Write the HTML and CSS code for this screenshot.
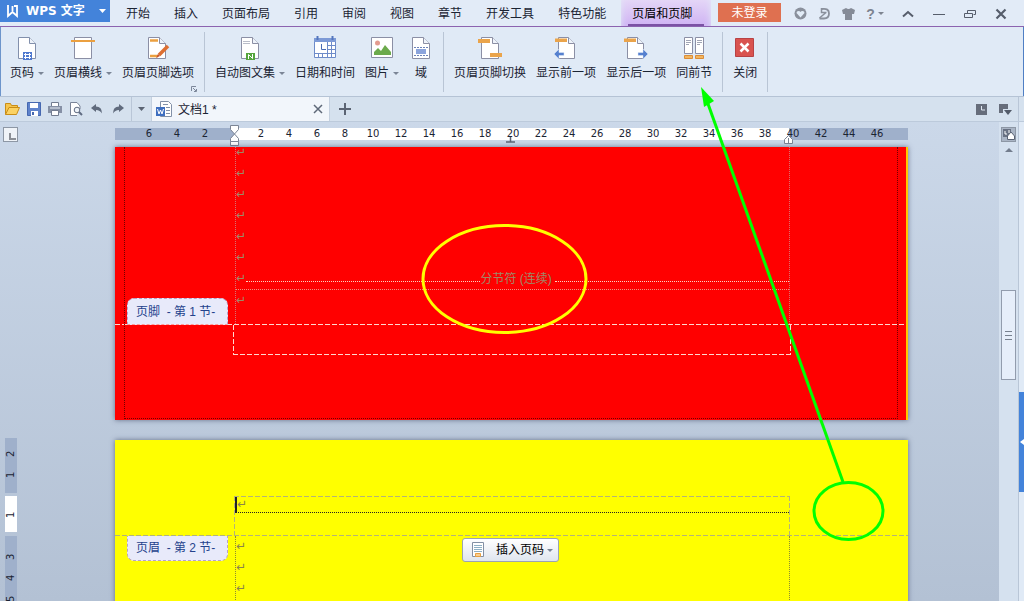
FILE: index.html
```html
<!DOCTYPE html>
<html lang="zh-CN">
<head>
<meta charset="utf-8">
<title>WPS 文字 - 文档1</title>
<link rel="stylesheet" href="styles.css">
</head>
<body>
<div class="app">
  <header class="titlebar">
    <button class="brand">
      <svg width="13" height="13" viewBox="0 0 13 13"><path d="M2 0v11l4.500-4 4.500 4V1H8M6.500 1v5" fill="none" stroke="#fff" stroke-width="1.800"/></svg>
      <span>WPS 文字</span>
      <svg class="brand-caret" width="7" height="4" viewBox="0 0 7 4"><path d="M0 0h7L3.500 4z" fill="#fff"/></svg>
    </button>
    <nav class="menu">
      <button>开始</button><button>插入</button><button>页面布局</button><button>引用</button><button>审阅</button><button>视图</button><button>章节</button><button>开发工具</button><button>特色功能</button><button class="active">页眉和页脚</button>
    </nav>
    <button class="login">未登录</button>
    <div class="tools">
      <button aria-label="云服务"><svg width="13" height="13" viewBox="0 0 13 13"><circle cx="6.500" cy="6.500" r="6" fill="#8a909c"/><path d="M6.500 10.500L2.500 6q0-2 2-2 1.500 0 2 1 .5-1 2-1 2 0 2 2z" fill="#e2ecf7"/></svg></button>
      <button aria-label="反馈"><svg width="13" height="13" viewBox="0 0 13 13"><path d="M4 2Q11 1 11 6.500 11 11.500 6 11.500H1.500" fill="none" stroke="#8a909c" stroke-width="1.800"/><path d="M3.500 1v4.500h5M8 5.500L1.500 11" fill="none" stroke="#8a909c" stroke-width="1.500"/></svg></button>
      <button aria-label="皮肤"><svg width="13" height="13" viewBox="0 0 13 13"><path d="M4 1q2.500 2 5 0l4 2-1 4h-2v6H3V7H1L0 3z" fill="#858b97"/></svg></button>
      <button class="help" aria-label="帮助"><b>?</b><svg width="6" height="3" viewBox="0 0 6 3"><path d="M0 0h6L3 3z" fill="#7d8490"/></svg></button>
    </div>
    <div class="window-buttons">
      <button aria-label="折叠功能区"><svg width="12" height="12" viewBox="0 0 12 12"><path d="M1 8.500L6 4l5 4.500" fill="none" stroke="#565d6b" stroke-width="2"/></svg></button>
      <button aria-label="最小化"><svg width="12" height="12" viewBox="0 0 12 12"><path d="M0 6.500h12" stroke="#565d6b"/></svg></button>
      <button aria-label="还原"><svg width="12" height="12" viewBox="0 0 12 12"><path d="M3.500 5V2.500h8v4h-2" fill="none" stroke="#565d6b"/><path d="M.5 5.500h8v4h-8z" fill="none" stroke="#565d6b"/></svg></button>
      <button aria-label="关闭窗口"><svg width="12" height="12" viewBox="0 0 12 12"><path d="M1.500 1.500l9 9M10.500 1.500l-9 9" stroke="#565d6b" stroke-width="2.200"/></svg></button>
    </div>
  </header>

  <section class="ribbon">
    <button class="cmd"><svg width="24" height="24" viewBox="0 0 24 24"><path d="M3.500 1.500h11l6 6v15h-17z" fill="#fff" stroke="#8290ac"/><path d="M14.500 1.500v6h6" fill="#eef3fa" stroke="#8290ac"/><path d="M8 16h9v8H8z" fill="#4f79cf"/><path d="M10.500 17v6M14.500 17v6M9 18.500h7M9 21.500h7" stroke="#fff"/></svg><span>页码<i class="caret"></i></span></button>
    <button class="cmd"><svg width="24" height="24" viewBox="0 0 24 24"><path d="M3.500 1.500h17v21h-17z" fill="#fff" stroke="#8b8fa5"/><path d="M0 5h24" stroke="#eba040" stroke-width="2"/></svg><span>页眉横线<i class="caret"></i></span></button>
    <button class="cmd"><svg width="24" height="24" viewBox="0 0 24 24"><path d="M2.500 1.500h11l6 6v15h-17z" fill="#fff" stroke="#8b8fa5"/><path d="M13.500 1.500v6h6" fill="#eef3fa" stroke="#8b8fa5"/><path d="M4 4.500h8M4 20h8" stroke="#eba040" stroke-width="2.500"/><path d="M13 19l9-9" stroke="#dd6f32" stroke-width="3.500"/><path d="M10 22l2-4 2 2z" fill="#c65329"/></svg><span>页眉页脚选项</span></button>
    <svg class="launcher" width="6" height="6" viewBox="0 0 6 6"><path d="M.5 5V.5H5M3 5.500h2.500V3M2 2l3 3" fill="none" stroke="#7c879a"/></svg>
    <i class="divider"></i>
    <button class="cmd"><svg width="24" height="24" viewBox="0 0 24 24"><path d="M3.500 1.500h11l6 6v15h-17z" fill="#fff" stroke="#8b8fa5"/><path d="M14.500 1.500v6h6" fill="#eef3fa" stroke="#8b8fa5"/><path d="M5 5.500h7M5 7.500h7" stroke="#b9bdc9"/><path d="M8 17h9v7H8z" fill="#55a53c"/><path d="M10.500 23v-4.500l4 4V18" fill="none" stroke="#fff"/></svg><span>自动图文集<i class="caret"></i></span></button>
    <button class="cmd"><svg width="24" height="24" viewBox="0 0 24 24"><path d="M1.500 2.500h21v19h-21z" fill="#fff" stroke="#6d8bc9"/><path d="M1 2h22v4H1z" fill="#7d9ad6"/><path d="M4.500 0v4M19.500 0v4" stroke="#5476bd" stroke-width="2"/><path d="M1.500 17.500h21M15 9.500h7M15 13.500h7M5.500 17v4M9.500 17v4M14.500 6v15M18.500 6v15" stroke="#6d8bc9"/><path d="M8.500 8v5.500H13" fill="none" stroke="#4a6db5"/></svg><span>日期和时间</span></button>
    <button class="cmd"><svg width="24" height="24" viewBox="0 0 24 24"><path d="M1.500 1.500h21v20h-21z" fill="#fff" stroke="#8b8fa5"/><circle cx="7.500" cy="7" r="2.500" fill="#e39b90"/><path d="M4 19v-3l4-4 3 3 4-6 6 7v3z" fill="#6caa4c"/></svg><span>图片<i class="caret"></i></span></button>
    <button class="cmd"><svg width="24" height="24" viewBox="0 0 24 24"><path d="M3.500 1.500h11l6 6v15h-17z" fill="#fff" stroke="#8b8fa5"/><path d="M14.500 1.500v6h6" fill="#eef3fa" stroke="#8b8fa5"/><path d="M7 13h10v5H7z" fill="#8ba4dc"/><path d="M5 11.500h14M5 19.500h14" stroke="#6d83b8" stroke-dasharray="2 1"/></svg><span>域</span></button>
    <i class="divider"></i>
    <button class="cmd"><svg width="24" height="24" viewBox="0 0 24 24"><path d="M3.500 1.500h11l6 6v15h-17z" fill="#fff" stroke="#8b8fa5"/><path d="M14.500 1.500v6h6" fill="#eef3fa" stroke="#8b8fa5"/><path d="M0 3h12v4H0zM12 17h12v4H12z" fill="#eaa44b"/></svg><span>页眉页脚切换</span></button>
    <button class="cmd"><svg width="24" height="24" viewBox="0 0 24 24"><path d="M4.500 1.500h10l6 6v15h-16z" fill="#fff" stroke="#8b8fa5"/><path d="M14.500 1.500v6h6" fill="#eef3fa" stroke="#8b8fa5"/><path d="M1 2.500h12v3.500H1z" fill="#eaa44b"/><path d="M0 18l5-5v3.500h5v3H5V23z" fill="#5580cf" stroke="#e0eaf6" stroke-width=".5"/></svg><span>显示前一项</span></button>
    <button class="cmd"><svg width="24" height="24" viewBox="0 0 24 24"><path d="M3.500 1.500h10l6 6v15h-16z" fill="#fff" stroke="#8b8fa5"/><path d="M13.500 1.500v6h6" fill="#eef3fa" stroke="#8b8fa5"/><path d="M0 2.500h12v3.500H0z" fill="#eaa44b"/><path d="M24 18l-5-5v3.500h-5v3h5V23z" fill="#5580cf" stroke="#e0eaf6" stroke-width=".5"/></svg><span>显示后一项</span></button>
    <button class="cmd"><svg width="24" height="24" viewBox="0 0 24 24"><path d="M2.500 1.500h8v16h-8zM13.500 1.500h8v16h-8z" fill="#fff" stroke="#8b8fa5"/><path d="M4 4.500h5M4 6.500h5M4 8.500h3M15 4.500h5M15 6.500h5M15 8.500h3" stroke="#a0a5b5"/><path d="M2.500 19.500h8v3h-8zM13.500 19.500h8v3h-8z" fill="#f2b660" stroke="#dc8c35"/></svg><span>同前节</span></button>
    <i class="divider"></i>
    <button class="cmd"><svg width="24" height="24" viewBox="0 0 24 24"><path d="M2.500 2.500h18v18h-18z" fill="#d9534f" stroke="#b84245"/><path d="M7.500 7.500l8 8M15.500 7.500l-8 8" stroke="#fff" stroke-width="2.500"/></svg><span>关闭</span></button>
    <i class="divider"></i>
  </section>

  <section class="filebar">
    <div class="quick">
      <button aria-label="打开"><svg width="15" height="14" viewBox="0 0 15 14"><path d="M.5 12.500v-11h5l1 2h6V6" fill="#f6c54c" stroke="#c98d16"/><path d="M.5 12.500L4 5.500h10.500l-3 7z" fill="#fbd263" stroke="#c98d16"/></svg></button>
      <button aria-label="保存"><svg width="14" height="14" viewBox="0 0 14 14"><path d="M.5 .5h13v13H.5z" fill="#5f83cb" stroke="#4668b0"/><path d="M3 1h8v5H3zM4 9h7v5H4z" fill="#fff"/><path d="M5 10h2v3H5z" fill="#4668b0"/></svg></button>
      <button aria-label="打印"><svg width="14" height="14" viewBox="0 0 14 14"><path d="M3.500 4V.5h7V4" fill="#fff" stroke="#737d90"/><path d="M0 4h14v7H0z" fill="#8590a5"/><path d="M3.500 8.500h7v5h-7z" fill="#fff" stroke="#737d90"/><path d="M2 6h10" stroke="#e7edf5"/></svg></button>
      <button aria-label="打印预览"><svg width="14" height="14" viewBox="0 0 14 14"><path d="M11 7V4L8 .5H1.500v13H8" fill="#fff" stroke="#7a8498"/><circle cx="8" cy="8" r="2.800" fill="#eef3f9" stroke="#606c82"/><path d="M10 10l3 3" stroke="#606c82" stroke-width="2"/></svg></button>
      <button aria-label="撤销"><svg width="12" height="10" viewBox="0 0 12 10"><path d="M0 4l5-4v2.500q6 0 6 7Q9 6 5 6v2z" fill="#606b7d"/></svg></button>
      <button aria-label="恢复"><svg width="12" height="10" viewBox="0 0 12 10"><path d="M12 4L7 0v2.500q-6 0-6 7Q3 6 7 6v2z" fill="#606b7d"/></svg></button>
    </div>
    <button class="more" aria-label="自定义快速访问"><svg width="7" height="4" viewBox="0 0 7 4"><path d="M0 0h7L3.500 4z" fill="#5b6473"/></svg></button>
    <div class="filetab">
      <svg width="16" height="16" viewBox="0 0 16 16"><path d="M4.500 .5h8l3 3v12h-11z" fill="#fff" stroke="#8291a8"/><path d="M7 3.500h5M10 6.500h4M10 9.500h4M10 12.500h4" stroke="#8291a8"/><path d="M0 6h9v9H0z" fill="#3f6fc0"/><path d="M1.500 8l1.500 5 1.500-4L6 13l1.500-5" fill="none" stroke="#fff"/></svg>
      <span>文档1 *</span>
      <button aria-label="关闭文档"><svg width="10" height="10" viewBox="0 0 10 10"><path d="M1 1l8 8M9 1L1 9" stroke="#5e6878" stroke-width="1.500"/></svg></button>
    </div>
    <button class="new" aria-label="新建"><svg width="12" height="12" viewBox="0 0 12 12"><path d="M6 0v12M0 6h12" stroke="#5b6473" stroke-width="2"/></svg></button>
    <div class="filebar-end">
      <button aria-label="历史"><svg width="11" height="11" viewBox="0 0 11 11"><path d="M0 0h11v11H0z" fill="#666d7b"/><path d="M5.500 2v4H9" fill="none" stroke="#e0e8f2"/></svg></button>
      <button aria-label="窗口列表"><svg width="13" height="11" viewBox="0 0 13 11"><path d="M0 0h9v5H4v4H0z" fill="#666d7b"/><path d="M5 6h8l-4 5z" fill="#525a69"/></svg></button>
    </div>
  </section>

  <main class="work">
    <aside class="side">
      <button class="tabstop" aria-label="制表位"><svg width="7" height="7" viewBox="0 0 7 7"><path d="M1 0v6h6" fill="none" stroke="#8b8f96" stroke-width="2"/></svg></button>
      <div class="vruler"><div class="v-top"><span>2</span><span>1</span></div><div class="v-mid"><span>1</span></div><div class="v-low"><span>3</span><span>4</span><span>5</span></div></div>
    </aside>

    <div class="canvas">
      <div class="hruler">
        <span>6</span><span>4</span><span>2</span><span></span><span>2</span><span>4</span><span>6</span><span>8</span><span>10</span><span>12</span><span>14</span><span>16</span><span>18</span><span>20</span><span>22</span><span>24</span><span>26</span><span>28</span><span>30</span><span>32</span><span>34</span><span>36</span><span>38</span><span>40</span><span>42</span><span>44</span><span>46</span>
        <svg class="indent-left" width="9" height="21" viewBox="0 0 9 21"><path d="M.5 .5h8v4l-4 4.500 4 4.500v3h-8v-3L4.500 9 .5 4.500zM.5 16.500h8v4h-8z" fill="#fff" stroke="#7c8595"/></svg>
        <svg class="indent-mid" width="9" height="6" viewBox="0 0 9 6"><path d="M0 5h9M4.500 0v5" stroke="#5c6575" stroke-width="1.500"/></svg>
        <svg class="indent-right" width="9" height="9" viewBox="0 0 9 9"><path d="M.5 8.500v-4l4-4 4 4v4zM4.500 3v5" fill="#fff" stroke="#7c8595"/></svg>
      </div>

      <article class="page red">
        <div class="text-body">
          <p class="mark">↵</p><p class="mark">↵</p><p class="mark">↵</p><p class="mark">↵</p><p class="mark">↵</p><p class="mark">↵</p>
          <p class="mark section-break">↵<i></i><span>分节符 (连续)</span><i></i></p>
          <p class="mark last">↵</p>
        </div>
        <div class="footer-zone"><div class="footer-box"></div></div>
        <span class="tag tag-footer">页脚&nbsp; - 第 1 节-</span>
      </article>

      <article class="page yellow">
        <div class="header-zone"><div class="header-box"><p class="mark">↵</p></div></div>
        <div class="text-body"><p class="mark">↵</p><p class="mark">↵</p><p class="mark">↵</p></div>
        <span class="tag tag-header">页眉&nbsp; - 第 2 节-</span>
        <button class="insert-number"><svg width="14" height="16" viewBox="0 0 14 16"><path d="M1.500 .5h11v14h-11z" fill="#fff" stroke="#8390a4"/><path d="M3 3.500h8M3 5.500h8M3 7.500h8M3 9.500h8" stroke="#8fb0c4"/><path d="M4.500 11.500h5v3h-5z" fill="#f9cd8e" stroke="#e8a042"/></svg><span>插入页码</span><i class="caret"></i></button>
      </article>
    </div>

    <div class="scroll">
      <button class="browse" aria-label="选择浏览对象"><svg width="12" height="11" viewBox="0 0 12 11"><path d="M0 0h8v8H0z" fill="#697283"/><path d="M2 2v3h2M6 1v3" fill="none" stroke="#fff"/><path d="M4.500 10.500V7l3.500-4 3.500 4v3.500z" fill="#fff" stroke="#596273"/></svg></button>
      <button class="up" aria-label="向上滚动"><svg width="8" height="4" viewBox="0 0 8 4"><path d="M0 4h8L4 0z" fill="#737d8d"/></svg></button>
      <div class="thumb"><i></i><i></i><i></i></div>
    </div>
    <div class="dock"><button aria-label="展开任务窗格"><svg width="4" height="6" viewBox="0 0 4 6"><path d="M4 0v6L0 3z" fill="#fff"/></svg></button></div>
  </main>

  <svg class="notes" width="1024" height="601" viewBox="0 0 1024 601">
    <ellipse cx="504.500" cy="279" rx="81.500" ry="53.500" fill="none" stroke="#ffff00" stroke-width="3"/>
    <g stroke="#00ff00" stroke-width="3" fill="none"><ellipse cx="848.500" cy="511" rx="34.500" ry="28.500"/><path d="M843 482L707 101"/></g>
    <path d="M701 87l13 14-10 6z" fill="#00ff00"/>
  </svg>
</div>
</body>
</html>
```
FILE: styles.css
```css
* { box-sizing: border-box; }
body {
  margin: 0;
  font: 12px/16px "Liberation Sans", "Noto Sans CJK SC", sans-serif;
  color: #1b2433;
}
button {
  display: flex;
  align-items: center;
  justify-content: center;
  margin: 0;
  padding: 0;
  border: 0;
  background: none;
  color: inherit;
  font: inherit;
  white-space: nowrap;
}
p { margin: 0; }
svg { flex: none; display: block; }

.app {
  position: relative;
  display: flex;
  flex-direction: column;
  height: 100vh;
  overflow: hidden;
}

/* Title bar */
.titlebar {
  display: flex;
  height: 27px;
  flex: none;
  padding-right: 8px;
  background: #e2ebf7;
  border-bottom: 1px solid #8c63b0;
}
.brand {
  width: 110px;
  height: 22px;
  padding: 0 4px 0 6px;
  gap: 7px;
  justify-content: flex-start;
  background: #4383da;
  color: #fff;
  font-family: "DejaVu Sans", "Noto Sans CJK SC", sans-serif;
  font-weight: bold;
}
.brand-caret { margin-left: auto; }
.menu { display: flex; margin-left: 4px; }
.menu button { padding: 2px 12px 0; }
.menu .active {
  width: 90px;
  margin-left: 3px;
  padding-left: 11px;
  justify-content: flex-start;
  background: linear-gradient(#e4d6f7, #cfb3f3);
  box-shadow: inset 7px 0 7px -7px #e2ebf7, inset -7px 0 7px -7px #e2ebf7;
  color: #000;
  position: relative;
}
.menu .active::after {
  content: "";
  position: absolute;
  inset: auto 7px 0 7px;
  height: 2px;
  background: #7b52a4;
}
.login {
  width: 63px;
  height: 19px;
  margin: 3px 7px 0 auto;
  background: #df7050;
  color: #fff;
}
.tools, .window-buttons { display: flex; padding-top: 1px; }
.tools button { width: 24px; }
.tools .help {
  width: 30px;
  margin-right: 2px;
  gap: 3px;
  font: bold 14px/16px "Liberation Sans", sans-serif;
  color: #7d8490;
}
.window-buttons button { width: 31px; }

/* Ribbon */
.ribbon {
  position: relative;
  display: flex;
  flex: none;
  gap: 10px;
  height: 70px;
  padding: 5px 10px;
  background: #e0eaf6;
  border: solid #b5c3d5;
  border-width: 0 0 1px;
  box-shadow: inset 1px 0 #6d95cb, inset -1px 0 #4f7fc4;
}
.cmd {
  flex-direction: column;
  justify-content: flex-start;
  gap: 5px;
  padding-top: 4px;
}
.cmd span { display: flex; align-items: center; }
.caret {
  margin-left: 4px;
  border: 3px solid transparent;
  border-top-color: #7b8596;
  border-bottom: 0;
}
.divider { width: 1px; height: 60px; background: #b9c5d5; }
.launcher { position: absolute; left: 191px; bottom: 4px; }

/* Quick access and file tabs */
.filebar {
  display: flex;
  align-items: center;
  flex: none;
  height: 25px;
  background: #d5e1ee;
  border-bottom: 1px solid #bccadb;
}
.quick { display: flex; padding: 0 3px 0 2px; }
.quick button { width: 21px; height: 24px; }
.more {
  width: 20px;
  height: 24px;
  border-left: 1px solid #b9c6d7;
}
.filetab {
  display: flex;
  align-items: center;
  align-self: stretch;
  width: 179px;
  padding: 0 6px 0 4px;
  gap: 6px;
  background: #f2f6fb;
  border: solid #c4d0df;
  border-width: 0 1px;
}
.filetab span { flex: 1; padding-top: 2px; }
.new { width: 30px; height: 24px; }
.filebar-end {
  display: flex;
  align-self: stretch;
  gap: 12px;
  margin-left: auto;
  margin-right: 5px;
  padding-right: 6px;
  border-right: 1px solid #b9c6d7;
}

/* Work area */
.work {
  display: flex;
  flex: 1;
  min-height: 0;
  background: linear-gradient(#cbd8e9, #b3c1d4);
}
.side { width: 24px; padding: 5px 0 0 3px; }
.tabstop {
  width: 15px;
  height: 15px;
  padding: 3px 0 0 3px;
  background: #eff3f8;
  border: 1px solid #8d97a5;
}
.vruler {
  width: 12px;
  margin: 296px 0 0 2px;
  font: 10px/12px "DejaVu Sans", sans-serif;
}
.vruler div { display: flex; flex-direction: column; background: #9fb0cb; }
.vruler span {
  height: 21px;
  writing-mode: vertical-rl;
  transform: rotate(180deg);
  text-align: center;
}
.vruler .v-top { height: 55px; padding-top: 5px; }
.vruler .v-mid { height: 36px; margin: 3px 0 4px; padding-top: 8px; background: #fff; }
.vruler .v-low { height: 80px; padding-top: 10px; }

.canvas {
  flex: 1;
  display: flex;
  flex-direction: column;
  align-items: center;
  min-width: 0;
  overflow: hidden;
}
.hruler {
  position: relative;
  display: flex;
  flex: none;
  width: 793px;
  height: 12px;
  margin: 6px 0 7px;
  padding-left: 20px;
  background: linear-gradient(90deg, #9fb0cb 120px, #fff 120px 674px, #9fb0cb 674px);
  font: 10px/12px "DejaVu Sans", sans-serif;
}
.hruler span { width: 28px; text-align: center; }
.hruler svg { position: absolute; }
.indent-left { left: 115px; top: -3px; }
.indent-mid { left: 391px; top: 9px; }
.indent-right { left: 669px; top: 7px; }

.page {
  position: relative;
  flex: none;
  width: 793px;
  box-shadow: 0 0 5px rgba(60, 70, 100, .7);
}
.text-body {
  display: flex;
  flex-direction: column;
  width: 555px;
  margin-left: 120px;
}
.mark {
  flex: none;
  height: 21px;
  font: 12px/21px "DejaVu Sans", "Noto Sans CJK SC", sans-serif;
  color: #a08868;
}
.red {
  height: 273px;
  margin-bottom: 20px;
  background: #f00;
  border-right: 2px solid #ffc800;
}
.red::before {
  content: "";
  position: absolute;
  inset: 0 8px 1px 9px;
  border: 1px dotted #700000;
  border-top: 0;
}
.red .text-body {
  justify-content: flex-end;
  height: 177px;
  padding-bottom: 14px;
  overflow: hidden;
  border: dotted #d97070;
  border-width: 0 1px;
}
.section-break { display: flex; align-items: center; }
.section-break i { flex: 1; border-top: 1px dotted #ffd0c0; margin-top: 5px; }
.section-break span {
  padding-right: 3px;
  font: 12px/16px "Liberation Sans", "Noto Sans CJK SC", sans-serif;
}
.last { border-top: 1px dotted #f09080; }

/* Long dashes of the header and footer boundaries */
.footer-zone, .header-zone {
  background: repeating-linear-gradient(90deg, var(--dash) 0 5px, transparent 5px 7px) no-repeat;
  background-size: 100% 1px;
}
.footer-zone { --dash: #ffd8d0; padding-top: 1px; }
.header-zone { --dash: #b4b478; background-position: bottom; }
.footer-box, .header-box {
  background:
    repeating-linear-gradient(90deg, var(--dash) 0 5px, transparent 5px 7px) var(--edge) / 100% 1px no-repeat,
    repeating-linear-gradient(var(--dash) 0 5px, transparent 5px 7px) left / 1px 100% no-repeat,
    repeating-linear-gradient(var(--dash) 0 5px, transparent 5px 7px) right / 1px 100% no-repeat;
}
.footer-box {
  --edge: bottom;
  width: 558px;
  height: 30px;
  margin-left: 118px;
}
.tag {
  position: absolute;
  left: 12px;
  width: 101px;
  height: 27px;
  padding-left: 8px;
  border: 1px dashed #b8a0c8;
  background: #e8eafa;
  color: #24428c;
  line-height: 26px;
}
.tag-footer { top: 151px; border-radius: 7px 7px 0 0; border-bottom-color: #f99; }
.tag-header { top: 96px; height: 25px; line-height: 24px; border-radius: 0 0 7px 7px; border-top: 0; }

.yellow { height: 200px; padding-top: 56px; background: #ff0; }
.header-zone { height: 40px; }
.header-box {
  --edge: top;
  width: 556px;
  height: 39px;
  margin-left: 119px;
  padding: 1px 1px 0;
}
.header-box .mark {
  height: 16px;
  line-height: 15px;
  border-bottom: 1px dotted #222;
  border-left: 2px solid #222;
}
.yellow .text-body {
  height: 104px;
  border: dotted #8c8c30;
  border-width: 0 1px;
}
.yellow .mark { color: #8c8448; }
.insert-number {
  position: absolute;
  left: 347px;
  top: 98px;
  width: 97px;
  height: 24px;
  gap: 11px;
  padding-left: 3px;
  background: linear-gradient(#fff, #dfe5ee);
  border: 1px solid #9ba4b2;
  border-radius: 3px;
  color: #000;
}
.insert-number .caret { margin-left: -8px; }

/* Scrollbar and docked pane */
.scroll {
  display: flex;
  flex-direction: column;
  align-items: center;
  width: 19px;
  padding-top: 5px;
  background: #d5e1ef;
}
.browse { width: 15px; height: 15px; background: #aab5c5; border: 1px solid #8d97a5; }
.up { width: 15px; height: 16px; }
.thumb {
  display: flex;
  flex-direction: column;
  align-items: center;
  justify-content: center;
  gap: 3px;
  width: 15px;
  height: 90px;
  margin-top: 132px;
  background: #e6eefa;
  border: 1px solid #929cad;
}
.thumb i { width: 7px; height: 1px; background: #77818f; }
.dock { width: 6px; padding-top: 270px; background: #e0eaf6; border-left: 1px solid #b9c6d7; }
.dock button { width: 5px; height: 100px; background: #4383da; }

.notes { position: absolute; left: 0; top: 0; pointer-events: none; }
```
